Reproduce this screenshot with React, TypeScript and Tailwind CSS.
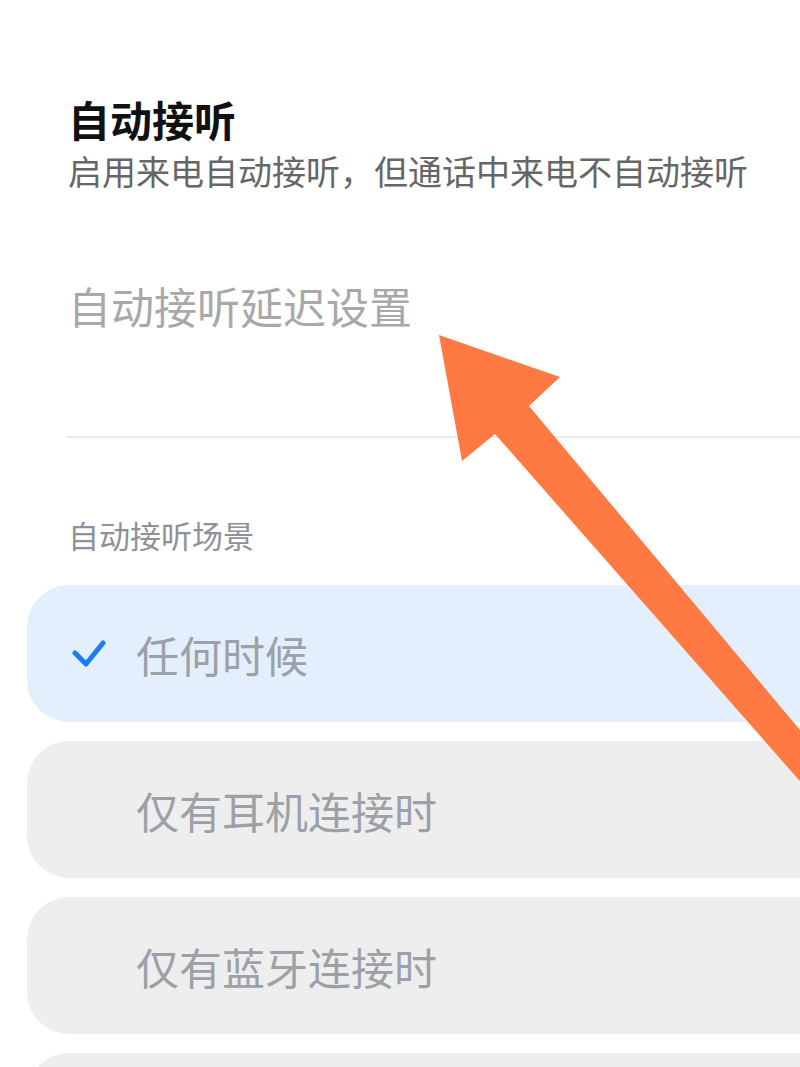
import React from 'react';

// the last row is below the fold; its label is not visible
const scenes = [
  { label: '任何时候', selected: true },
  { label: '仅有耳机连接时', selected: false },
  { label: '仅有蓝牙连接时', selected: false },
  { label: '', selected: false },
];

function Check() {
  return (
    <svg viewBox="0 0 34 30" className="h-[30px] w-[34px]" fill="none">
      <polyline
        points="3,14 14,25 31,4"
        stroke="#1a7ef0"
        strokeWidth="5"
        strokeLinecap="round"
        strokeLinejoin="round"
      />
    </svg>
  );
}

function Arrow() {
  // annotation drawn over the settings page
  return (
    <svg
      className="pointer-events-none absolute left-0 top-0 h-[1067px] w-[800px]"
      viewBox="0 0 800 1067"
    >
      <polygon
        points="439,335 560,377 529,406 820,754 820,804 495,434 462,461"
        fill="#fe7a42"
      />
    </svg>
  );
}

export default function App() {
  return (
    <div
      className="relative h-[1067px] w-[800px] overflow-hidden bg-white"
      style={{ fontFamily: '"Noto Sans CJK SC", "Noto Sans", sans-serif' }}
    >
      <div className="pl-[68px] pt-[94px]">
        <h1 className="text-[42px] font-bold leading-[50px] text-[#111111]">自动接听</h1>
        <p className="mt-[5px] whitespace-nowrap text-[34px] leading-[44px] text-[#666666]">
          启用来电自动接听，但通话中来电不自动接听
        </p>
        <p className="mt-[86px] text-[43px] leading-[52px] text-[#a8a8a8]">自动接听延迟设置</p>
      </div>

      <div className="ml-[66px] mt-[105px] h-[2px] bg-[#ebebeb]" />

      <div className="pl-[68px] pt-[77px]">
        <p className="text-[31px] leading-[40px] text-[#8c919a]">自动接听场景</p>
      </div>

      <div className="ml-[27px] mt-[30px] flex flex-col gap-[19px]">
        {scenes.map((s, i) => (
          <div
            key={i}
            className={`flex h-[137px] items-center gap-[30px] rounded-l-[42px] pl-[45px] ${
              s.selected ? 'bg-[#e3effd]' : 'bg-[#eeeeee]'
            }`}
          >
            <div className="flex w-[34px] items-center justify-center">
              {s.selected && <Check />}
            </div>
            {s.label && (
              <span className="text-[43px] leading-[52px] text-[#9ca0a7]">{s.label}</span>
            )}
          </div>
        ))}
      </div>

      <Arrow />
    </div>
  );
}
